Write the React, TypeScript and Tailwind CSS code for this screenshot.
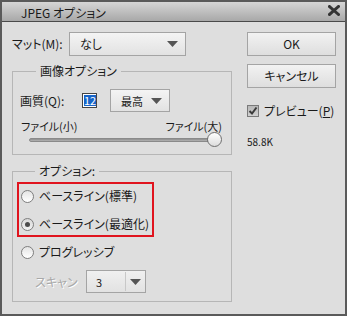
import React from "react";

const Arrow = ({ className = "" }: { className?: string }) => (
  <svg width="11" height="6" viewBox="0 0 11 6" className={className}>
    <path d="M0 0 L11 0 L5.5 6 Z" fill="#555" />
  </svg>
);

const Radio = ({ checked = false }: { checked?: boolean }) => (
  <span
    className={
      "w-[13px] h-[13px] rounded-full border border-[#7e7e7e] flex items-center justify-center shrink-0 " +
      (checked ? "bg-gradient-to-b from-[#d8d8d8] to-[#f2f2f2]" : "bg-gradient-to-b from-[#e4e4e4] to-[#ffffff]")
    }
  >
    {checked && <span className="w-[5px] h-[5px] rounded-full bg-[#4a4a4a]" />}
  </span>
);

export default function App() {
  return (
    <div className="w-[347px] h-[316px] bg-[#dedede] border-2 border-[#5a5a5a] flex flex-col font-['Noto_Sans_CJK_JP','Liberation_Sans',sans-serif] [font-feature-settings:'palt'] text-[12px] text-[#1a1a1a] leading-[14px]">
      {/* title bar */}
      <div className="h-[20px] shrink-0 border-b border-[#4a4a4a] bg-gradient-to-b from-[#d6d6d6] to-[#a8a8a8] flex items-end justify-between pl-[19px] pr-[5px]">
        <span className="pb-[1px] text-[12px]">JPEG オプション</span>
        <svg width="12" height="11" viewBox="0 0 12 11" className="self-center mb-[2px]">
          <path d="M1.5 1.5 L10.5 9.5 M10.5 1.5 L1.5 9.5" stroke="#333" strokeWidth="3" strokeLinecap="square" />
        </svg>
      </div>

      {/* body */}
      <div className="flex flex-1 pl-[10px] pt-[10px]">
        {/* left column */}
        <div className="w-[220px] flex flex-col">
          <div className="h-[24px] flex items-center">
            <span className="w-[57px]">マット(M):</span>
            <div className="w-[117px] h-[24px] border border-[#a4a4a4] bg-gradient-to-b from-[#f4f4f4] to-[#e2e2e2] flex items-center justify-between pl-[10px] pr-[7px]">
              <span>なし</span>
              <Arrow />
            </div>
          </div>

          <fieldset className="mt-[8px] border border-[#b6b6b6] pl-[7px] pr-[9px] pt-[11px] pb-[7px]">
            <legend className="ml-[16px] px-[4px]">画像オプション</legend>
            <div className="h-[23px] flex items-center">
              <span className="w-[62px]">画質(Q):</span>
              <span className="w-[15px] h-[15px] border border-[#444] bg-white p-[1px] flex">
                <span className="flex-1 bg-[#1764c8] text-white text-[11px] leading-[11px] flex items-center justify-center">12</span>
              </span>
              <div className="ml-[13px] w-[60px] h-[23px] border border-[#a4a4a4] bg-gradient-to-b from-[#f4f4f4] to-[#e2e2e2] flex items-center justify-between pl-[10px] pr-[7px]">
                <span className="text-[11px]">最高</span>
                <Arrow />
              </div>
            </div>
            <div className="mt-[8px] flex justify-between text-[11px] leading-[12px] pl-[1px]">
              <span>ファイル(小)</span>
              <span>ファイル(大)</span>
            </div>
            <div className="ml-[9px] h-[15px] flex items-center">
              <div className="flex-1 h-[4px] rounded-full bg-gradient-to-b from-[#8c8c8c] to-[#b4b4b4] border border-[#8a8a8a]" />
              <div className="-ml-[6px] w-[15px] h-[15px] rounded-full border border-[#6e6e6e] bg-gradient-to-b from-[#ffffff] to-[#dcdcdc]" />
            </div>
          </fieldset>

          <fieldset className="mt-[9px] border border-[#b6b6b6] pl-[4px] pt-[4px] pb-[8px]">
            <legend className="ml-[18px] px-[4px]">オプション:</legend>
            <div className="w-[137px] border-2 border-[#e0141e] pt-[1px] pl-[2px] flex flex-col gap-[6px]">
              <div className="h-[22px] flex items-center gap-[5px]">
                <Radio />
                <span>ベースライン(標準)</span>
              </div>
              <div className="h-[22px] flex items-center gap-[5px]">
                <Radio checked />
                <span>ベースライン(最適化)</span>
              </div>
            </div>
            <div className="mt-[4px] h-[22px] pl-[4px] flex items-center gap-[5px]">
              <Radio />
              <span>プログレッシブ</span>
            </div>
            <div className="mt-[7px] h-[23px] pl-[18px] flex items-center">
              <span className="w-[51px] text-[#a8a8a8] [text-shadow:1px_1px_0_#ffffff]">スキャン</span>
              <div className="w-[60px] h-[23px] border border-[#a4a4a4] bg-gradient-to-b from-[#f0f0f0] to-[#e2e2e2] flex items-center">
                <span className="flex-1 pl-[9px] text-[11px]">3</span>
                <span className="w-px h-[19px] bg-[#c8c8c8]" />
                <span className="w-[19px] flex justify-center">
                  <Arrow />
                </span>
              </div>
            </div>
          </fieldset>
        </div>

        {/* right column */}
        <div className="ml-[15px] w-[89px] flex flex-col">
          <button className="h-[24px] border border-[#a4a4a4] bg-gradient-to-b from-[#f2f2f2] to-[#dedede] text-[12px]">OK</button>
          <button className="mt-[8px] h-[24px] border border-[#a4a4a4] bg-gradient-to-b from-[#f2f2f2] to-[#dedede] text-[12px]">キャンセル</button>
          <div className="mt-[16px] flex items-center gap-[5px]">
            <span className="w-[12px] h-[12px] border border-[#7a7a7a] bg-gradient-to-b from-[#b8b8b8] to-[#d0d0d0] flex items-center justify-center">
              <svg width="10" height="10" viewBox="0 0 10 10">
                <path d="M1.5 5 L4 7.5 L8.5 1.5" stroke="#3a3a3a" strokeWidth="2" fill="none" />
              </svg>
            </span>
            <span>
              プレビュー(<span className="underline">P</span>)
            </span>
          </div>
          <div className="mt-[17px] text-[10px]">58.8K</div>
        </div>
      </div>
    </div>
  );
}
